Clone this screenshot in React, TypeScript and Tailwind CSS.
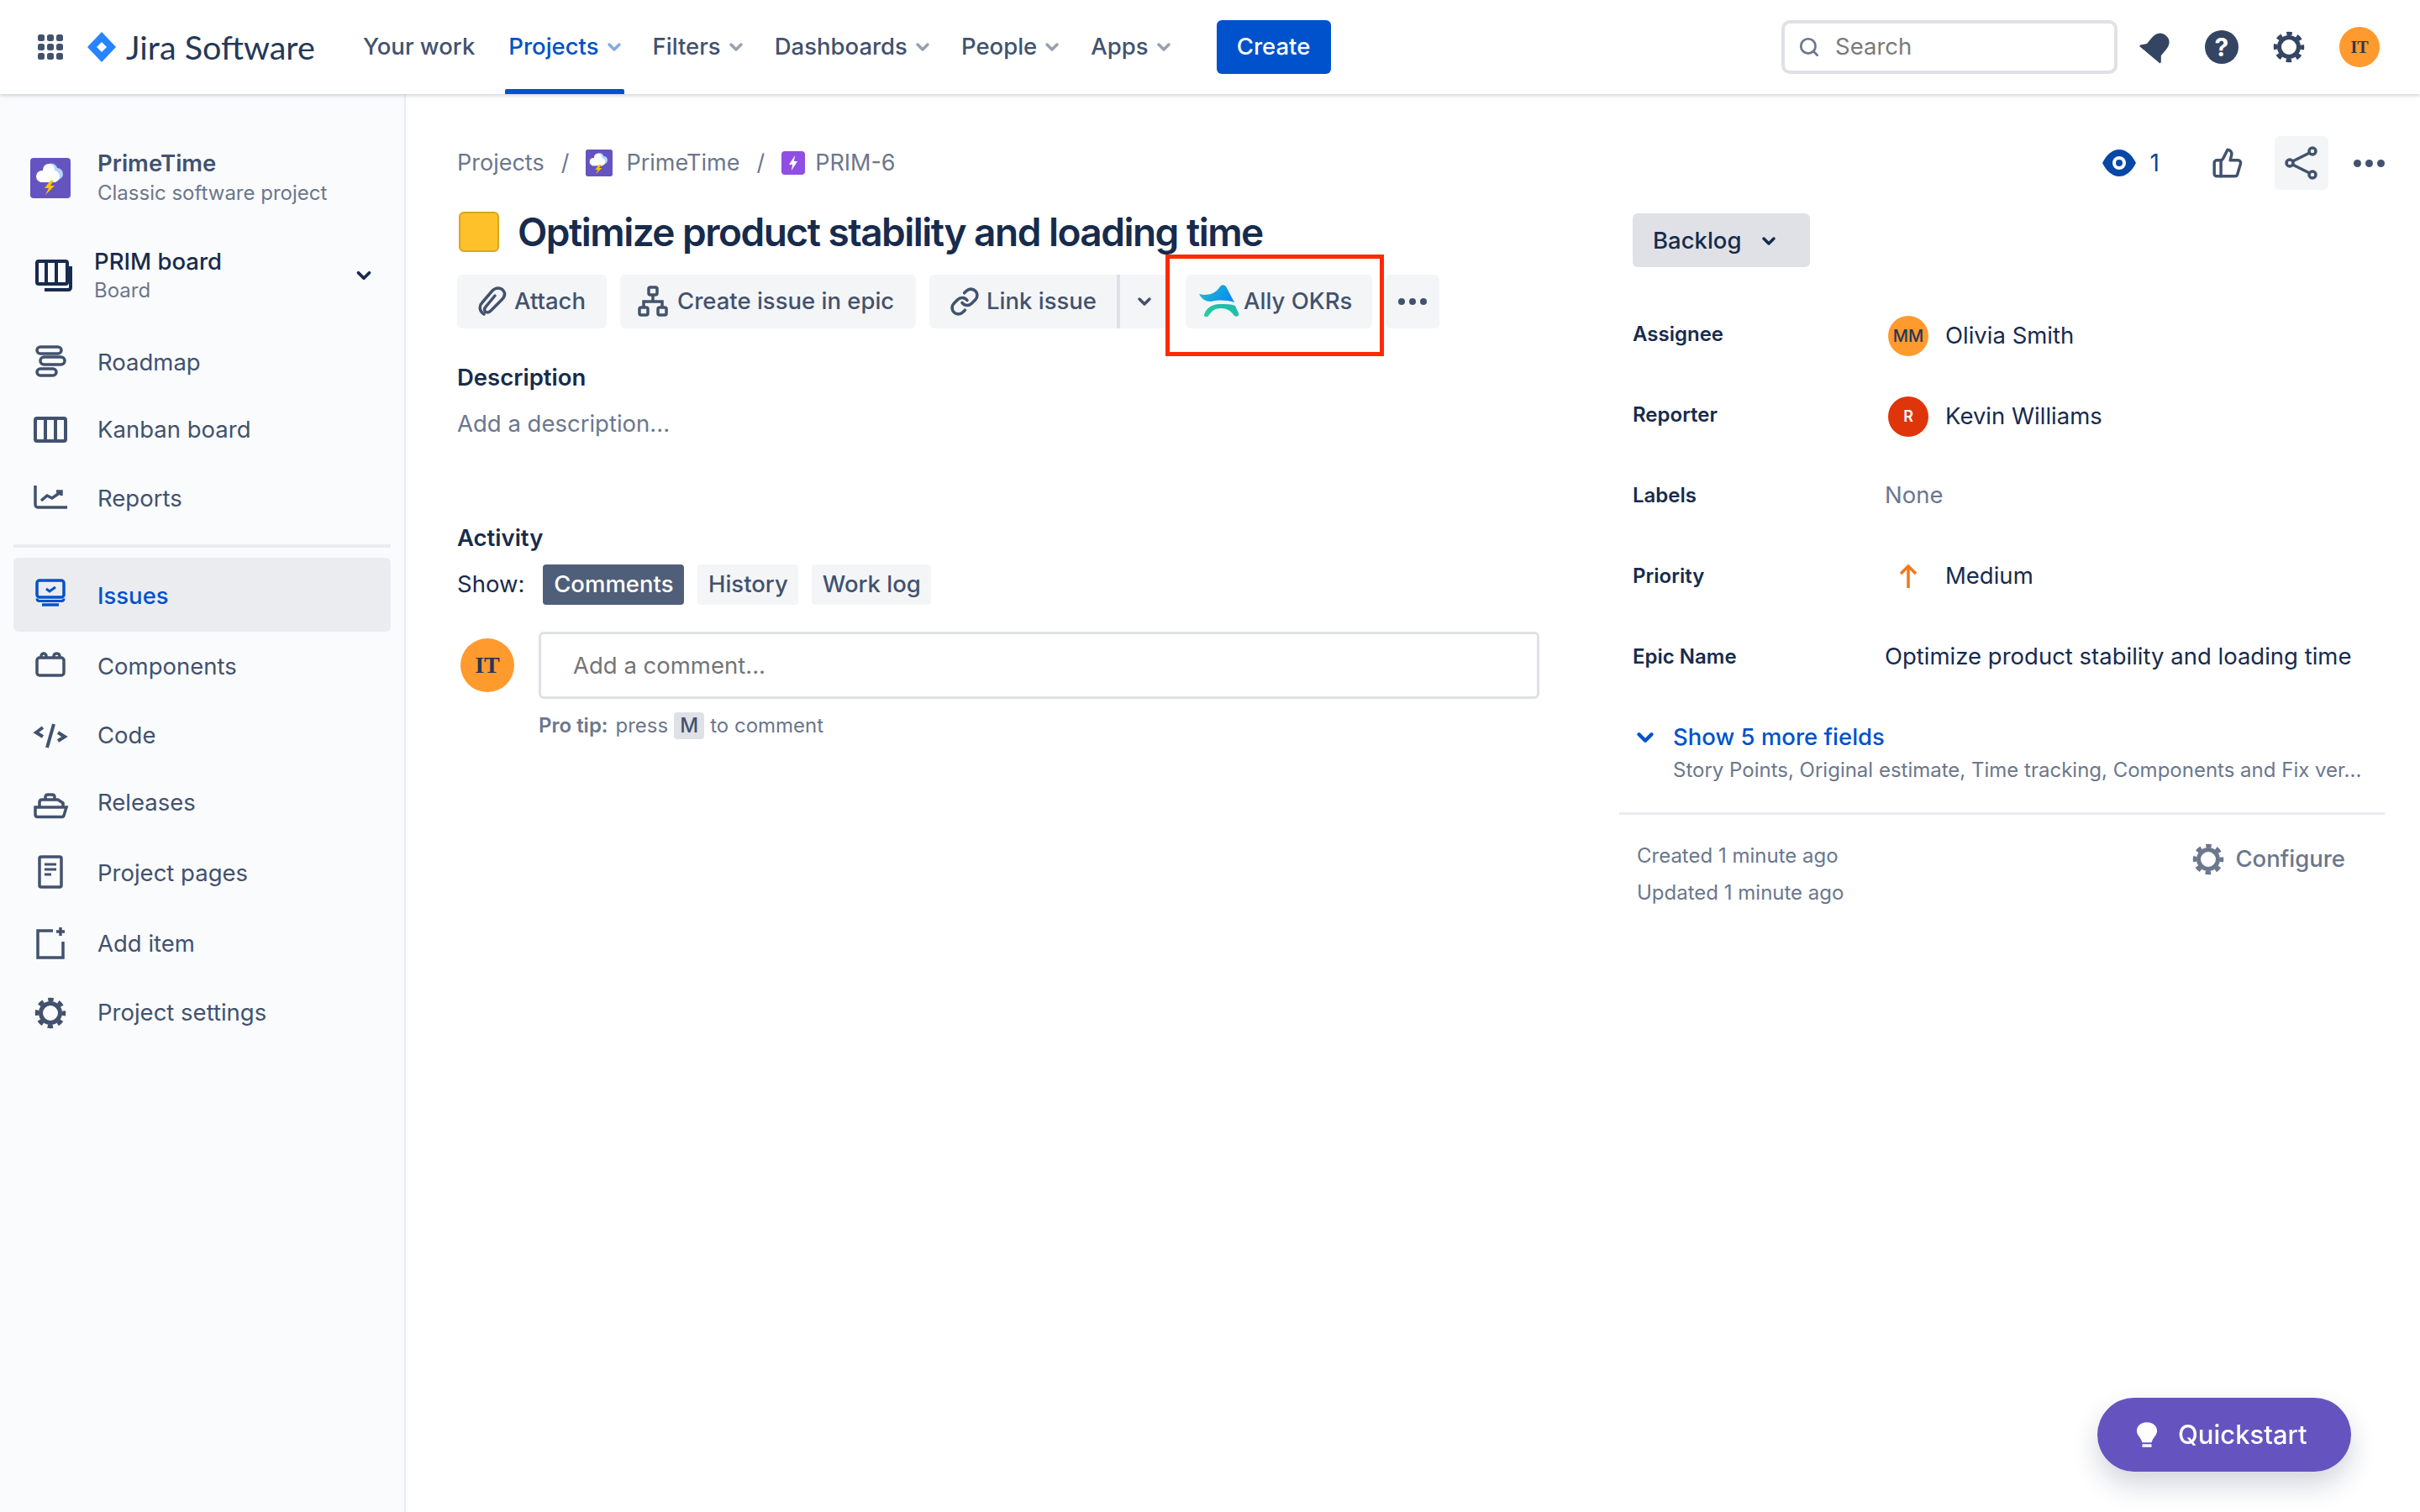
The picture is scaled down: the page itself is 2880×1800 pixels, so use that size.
import { useId } from 'react'
import { ChevronDown, Search, ThumbsUp, Link } from 'lucide-react'

const NAV = [
  { label: 'Projects', active: true, ml: 'ml-[40px]' },
  { label: 'Filters', active: false, ml: 'ml-[34px]' },
  { label: 'Dashboards', active: false, ml: 'ml-[34px]' },
  { label: 'People', active: false, ml: 'ml-[34px]' },
  { label: 'Apps', active: false, ml: 'ml-[34px]' },
]

function Gear({ size = 48, color = '#42526E' }: { size?: number; color?: string }) {
  return (
    <svg width={size} height={size} viewBox="0 0 48 48" fill="none">
      <circle cx="24" cy="24" r="11.500" stroke={color} strokeWidth="5" />
      <circle cx="24" cy="24" r="16" stroke={color} strokeWidth="4.500" strokeDasharray="6.5 6.07" strokeDashoffset="3.25" />
    </svg>
  )
}

function CloudLogo({ w, h }: { w: number; h: number }) {
  return (
    <svg width={w} height={h} viewBox="0 0 48 48" className="shrink-0">
      <rect width="48" height="48" rx="4" fill="#6554C0" />
      <circle cx="32" cy="19" r="7" fill="#B3D4FF" />
      <circle cx="25" cy="14" r="7.5" fill="#B3D4FF" />
      <circle cx="22" cy="14" r="7" fill="#fff" />
      <circle cx="14" cy="22" r="7" fill="#fff" />
      <circle cx="28" cy="22" r="7" fill="#fff" />
      <rect x="12" y="20" width="18" height="9" fill="#fff" />
      <path d="M24 27 L17 36 L22 36 L18 44 L29 33 L24 33 L28 27 Z" fill="#FFC400" />
    </svg>
  )
}

function AllyLogo() {
  const id = useId()
  return (
    <svg width="48" height="40" viewBox="0 0 48 40" className="shrink-0">
      <defs>
        <linearGradient id={id + 'a'} x1="0" y1="0" x2="1" y2="0.4">
          <stop offset="0" stopColor="#22C4C4" />
          <stop offset="1" stopColor="#0A8EF0" />
        </linearGradient>
        <linearGradient id={id + 'b'} x1="0" y1="1" x2="1" y2="0">
          <stop offset="0" stopColor="#22D39A" />
          <stop offset="1" stopColor="#1FB5B0" />
        </linearGradient>
      </defs>
      <path d="M0 11C8 13 16 12 22 6L26 1C28 0 30 0 32 2L42 21C32 18 24 18 14 20C8 20 3 17 0 11Z" fill={`url(#${id}a)`} />
      <path d="M6 36C8 28 16 23 24 23C32 23 38 23 43 25L47 34C48 38 44 39 41 36C38 31 33 28 26 28C19 28 15 31 12 36C10 39 6 39 6 36Z" fill={`url(#${id}b)`} />
    </svg>
  )
}

const stroke = { stroke: '#42526E', strokeWidth: 3.5, fill: 'none' }

const SIDE_ICONS: Record<string, React.ReactNode> = {
  Roadmap: (
    <g {...stroke}>
      <rect x="8" y="5" width="29" height="8" rx="4" />
      <rect x="12" y="17" width="29" height="9" rx="4.5" />
      <rect x="8" y="31" width="23" height="8" rx="4" />
    </g>
  ),
  'Kanban board': (
    <g {...stroke} strokeWidth="4">
      <rect x="6" y="10" width="36" height="27" rx="2" />
      <path d="M18 10v27M30 10v27" />
    </g>
  ),
  Reports: (
    <g {...stroke} strokeWidth="3.5">
      <path d="M6 8v22c0 3 1 4 4 4h34" />
      <path d="M13 26l7-6 6 3 10-7" />
      <path d="M31 15h6v5" />
    </g>
  ),
  Issues: (
    <g fill="none" stroke="#0052CC" strokeWidth="3.5">
      <rect x="8" y="7" width="32" height="20" rx="3" />
      <path d="M19 17l4 3 7-5" strokeWidth="3" />
      <path d="M8 28.5c0 2 1 3 3 3h26c2 0 3-1 3-3" strokeWidth="3" />
      <path d="M14 36h20" strokeWidth="3.5" />
    </g>
  ),
  Components: (
    <g {...stroke}>
      <rect x="8" y="13" width="32" height="21" rx="3" />
      <path d="M13 13v-2c0-4 6-4 6 0v2M28 13v-2c0-4 7-4 7 0v2" />
    </g>
  ),
  Code: (
    <g {...stroke} strokeWidth="4">
      <path d="M15 14L7 20l8 5M33 20l8 5-8 5M28 10l-8 28" />
    </g>
  ),
  Releases: (
    <g {...stroke}>
      <path d="M6 29h37l-3 10c-.4 1-1 1.500-2 1.500H9c-2 0-3-1-3-3z" />
      <path d="M11 29v-6c0-2 1-3 3-3h19l6 4v5" />
      <path d="M18 20v-3c0-2 1-3 3-3h5c2 0 3 1 3 3v3" />
    </g>
  ),
  'Project pages': (
    <g {...stroke}>
      <rect x="11" y="4" width="26" height="36" rx="2" />
      <path d="M17 13h14M17 19h14M17 25h8" strokeWidth="3" />
    </g>
  ),
  'Add item': (
    <g {...stroke}>
      <path d="M27 8H9v32h30V21" />
      <path d="M36 4v10M31 9h10" />
    </g>
  ),
}

const SIDE_ITEMS = [
  { label: 'Roadmap', row: 'h-[80px]' },
  { label: 'Kanban board', row: 'h-[80px]' },
  { label: 'Reports', row: 'h-[84px]' },
]
const SIDE_ITEMS_2 = [
  { label: 'Components', row: 'h-[84px]' },
  { label: 'Code', row: 'h-[80px]' },
  { label: 'Releases', row: 'h-[80px]' },
  { label: 'Project pages', row: 'h-[88px]' },
  { label: 'Add item', row: 'h-[80px]' },
]

function SideRow({ label, row }: { label: string; row: string }) {
  return (
    <div className={`${row} flex items-center pl-[36px] text-[27.5px] text-[#42526E]`}>
      <svg width="48" height="48" viewBox="0 0 48 48" className="mr-[32px] shrink-0">
        {SIDE_ICONS[label]}
      </svg>
      {label}
    </div>
  )
}

function ActionButton({ children, className = '' }: { children: React.ReactNode; className?: string }) {
  return (
    <div className={`flex h-[64px] items-center rounded-[6px] bg-[#F4F5F7] text-[27.5px] font-medium text-[#42526E] ${className}`}>
      {children}
    </div>
  )
}

function FieldRow({ label, children }: { label: string; children: React.ReactNode }) {
  return (
    <div className="flex h-[96px] items-center">
      <div className="w-[300px] text-[24px] font-semibold text-[#172B4D]">{label}</div>
      <div className="flex items-center text-[27.5px] text-[#172B4D]">{children}</div>
    </div>
  )
}

function Avatar({ text, size, className }: { text: string; size: string; className: string }) {
  return <div className={`flex shrink-0 items-center justify-center rounded-full ${size} ${className}`}>{text}</div>
}

export default function App() {
  return (
    <div className="relative flex h-screen w-full flex-col overflow-hidden bg-white font-['Inter',sans-serif]">
      {/* Top bar */}
      <header className="relative z-10 flex h-[112px] shrink-0 items-center bg-white pl-[44px] pr-[48px] shadow-[0_2px_4px_rgba(9,30,66,0.18)]">
        <svg width="32" height="32" viewBox="0 0 32 32" fill="#42526E" className="shrink-0">
          {[1, 12, 23].map((y) => [1, 12, 23].map((x) => <rect key={`${x}-${y}`} x={x} y={y} width="8" height="8" rx="2.500" />))}
        </svg>
        <svg width="34" height="36" viewBox="0 0 34 36" className="ml-[28px] shrink-0">
          <path d="M17 0L34 18 17 36 0 18z" fill="#2684FF" />
          <path d="M17 12l6 6-6 6-6-6z" fill="#fff" />
        </svg>
        <span className="ml-[12px] w-[222px] whitespace-nowrap font-['Lato',sans-serif] text-[39.5px] leading-none text-[#253858]">Jira Software</span>
        <span className="ml-[60px] text-[27.5px] font-medium text-[#42526E]">Your work</span>
        {NAV.map((n) => (
          <div key={n.label} className={`relative flex h-[112px] items-center ${n.ml} ${n.active ? 'text-[#0052CC]' : 'text-[#42526E]'}`}>
            <span className="text-[27.5px] font-medium">{n.label}</span>
            <ChevronDown size={24} strokeWidth={3.5} className={n.active ? 'ml-[6px] text-[#85A9E8]' : 'ml-[6px] text-[#97A0AF]'} />
            {n.active && <div className="absolute -left-[4px] right-0 bottom-0 h-[6px] rounded-t-[2px] bg-[#0052CC]" />}
          </div>
        ))}
        <div className="ml-[51px] flex h-[64px] w-[136px] items-center justify-center rounded-[6px] bg-[#0052CC] text-[27.5px] font-medium text-white">Create</div>

        <div className="ml-auto flex h-[64px] w-[400px] items-center rounded-[10px] border-[4px] border-[#DFE1E6] bg-white pl-[16px] text-[27.5px] text-[#7A7A7A]">
          <Search size={26} strokeWidth={2.5} className="text-[#6B778C]" />
          <span className="ml-[18px]">Search</span>
        </div>
        <svg width="40" height="40" viewBox="0 0 40 40" className="ml-[26px] shrink-0">
          <g transform="rotate(40 20 20)" fill="#344563">
            <path d="M20 2c-8 0-11 6-11 13v9l-5 6v2h32v-2l-5-6v-9c0-7-3-13-11-13z" />
          </g>
          <path d="M5 23l6 7-3 2z" fill="#fff" />
        </svg>
        <div className="ml-[38px] flex h-[40px] w-[40px] items-center justify-center rounded-full bg-[#344563] text-[30px] font-bold leading-none text-white">?</div>
        <div className="ml-[36px]"><Gear size={48} color="#344563" /></div>
        <Avatar text="IT" size="h-[48px] w-[48px]" className="ml-[36px] bg-[#FF9A2E] font-['Liberation_Serif',serif] text-[20px] font-bold text-[#253858]" />
      </header>

      <div className="flex min-h-0 flex-1">
        {/* Sidebar */}
        <aside className="w-[483px] shrink-0 border-r-[2px] border-[#EBECF0] bg-[#FAFBFC]">
          <div className="mt-[64px] flex items-center pl-[36px]">
            <CloudLogo w={48} h={48} />
            <div className="ml-[32px]">
              <div className="text-[27.5px] font-semibold leading-[36px] text-[#42526E]">PrimeTime</div>
              <div className="text-[24px] leading-[36px] text-[#6B778C]">Classic software project</div>
            </div>
          </div>
          <div className="mt-[45px] flex items-center pl-[42px] pr-[35px]">
            <svg width="44" height="38" viewBox="0 0 44 38" fill="none" stroke="#172B4D" strokeWidth="4" className="shrink-0">
              <rect x="2" y="2" width="36" height="27" rx="2" />
              <path d="M13 2v27M25 2v27M11 36h28c2 0 3-1 3-3V8" />
            </svg>
            <div className="ml-[26px] flex-1">
              <div className="text-[27.5px] font-medium leading-[36px] text-[#172B4D]">PRIM board</div>
              <div className="text-[24px] leading-[34px] text-[#6B778C]">Board</div>
            </div>
            <ChevronDown size={26} strokeWidth={3.5} className="text-[#172B4D]" />
          </div>
          <div className="mt-[29px]">
            {SIDE_ITEMS.map((s) => <SideRow key={s.label} {...s} />)}
          </div>
          <div className="mx-[16px] mt-[12px] h-[4px] bg-[#EBECF0]" />
          <div className="mx-[16px] mt-[12px] flex h-[88px] items-center rounded-[6px] bg-[#EBECF0] pl-[20px] text-[27.5px] font-medium text-[#0052CC]">
            <svg width="48" height="48" viewBox="0 0 48 48" className="mr-[32px] shrink-0">{SIDE_ICONS.Issues}</svg>
            <span className="pt-[3px]">Issues</span>
          </div>
          {SIDE_ITEMS_2.map((s) => <SideRow key={s.label} {...s} />)}
          <div className="flex h-[84px] items-center pl-[36px] text-[27.5px] text-[#42526E]">
            <div className="mr-[32px]"><Gear /></div>
            Project settings
          </div>
        </aside>

        {/* Main */}
        <main className="flex min-w-0 flex-1 pl-[61px] pr-[42px]">
          <div className="w-[1288px] shrink-0">
            <div className="mt-[62px] flex h-[40px] items-center text-[27px] text-[#6B778C]">
              Projects
              <span className="mx-[20px]">/</span>
              <CloudLogo w={32} h={32} />
              <span className="ml-[16px]">PrimeTime</span>
              <span className="mx-[20px]">/</span>
              <svg width="28" height="28" viewBox="0 0 28 28" className="mr-[12px]">
                <rect width="28" height="28" rx="4" fill="#904EE2" />
                <path d="M16 5l-7 11h4l-1 7 7-11h-4z" fill="#fff" />
              </svg>
              PRIM-6
            </div>
            <div className="mt-[32px] flex items-center">
              <div className="ml-[2px] h-[48px] w-[48px] rounded-[6px] border-[2px] border-[#D9A520] bg-[#FFC12A]" />
              <h1 className="ml-[22px] whitespace-nowrap text-[46px] font-semibold leading-[60px] tracking-[-0.033em] text-[#172B4D]">
                Optimize product stability and loading time
              </h1>
            </div>
            <div className="relative mt-[21px] flex items-center">
              <ActionButton className="w-[178px] gap-[8px] pl-[20px]">
                <svg width="40" height="40" viewBox="0 0 40 40" fill="none" stroke="#42526E" strokeWidth="3.500" strokeLinecap="round"><path d="M12 35C6 31 6 25 10 21L22 7C26 3 32 3 35 7C38 11 36 15 33 18L20 31C17 34 14 33 13 31C12 29 13 27 15 25L25 13" /></svg>
                Attach
              </ActionButton>
              <ActionButton className="ml-[16px] w-[352px] gap-[9px] pl-[19px]">
                <svg width="40" height="40" viewBox="0 0 40 40" fill="none" stroke="#42526E" strokeWidth="3.5"><rect x="15" y="3" width="10" height="9" rx="2" /><rect x="4" y="27" width="10" height="9" rx="2" /><rect x="26" y="27" width="10" height="9" rx="2" /><path d="M20 12v8M9 27v-7h22v7" /></svg>
                Create issue in epic
              </ActionButton>
              <ActionButton className="ml-[16px] w-[223px] justify-center gap-[8px] rounded-r-none">
                <Link size={36} strokeWidth={2.4} />
                Link issue
              </ActionButton>
              <div className="h-[64px] w-[4px] bg-[#DFE1E6]" />
              <ActionButton className="w-[56px] justify-center rounded-l-none pl-[2px]">
                <ChevronDown size={24} strokeWidth={3.500} />
              </ActionButton>
              <ActionButton className="ml-[22px] w-[222px] gap-[5px] bg-[#EBECF0] pl-[16px]">
                <AllyLogo />
                Ally OKRs
              </ActionButton>
              <ActionButton className="ml-[16px] w-[64px] justify-center gap-[5px]">
                <i className="h-[8px] w-[8px] rounded-full bg-[#42526E]" /><i className="h-[8px] w-[8px] rounded-full bg-[#42526E]" /><i className="h-[8px] w-[8px] rounded-full bg-[#42526E]" />
              </ActionButton>
              <div className="absolute left-[843px] top-[-24px] h-[121px] w-[260px] border-[5px] border-[#FF2A00]" />
            </div>
            <div className="mt-[40px] text-[27.5px] font-semibold leading-[36px] text-[#172B4D]">Description</div>
            <div className="mt-[19px] text-[27.5px] leading-[36px] text-[#6B778C]">Add a description...</div>
            <div className="mt-[100px] text-[27.5px] font-semibold leading-[36px] text-[#172B4D]">Activity</div>
            <div className="mt-[14px] flex items-center text-[27.5px] text-[#172B4D]">
              <span className="mr-[22px]">Show:</span>
              <div className="flex h-[48px] w-[168px] items-center justify-center rounded-[4px] bg-[#505F79] font-medium text-white">Comments</div>
              <div className="ml-[16px] flex h-[48px] w-[120px] items-center justify-center rounded-[4px] bg-[#F4F5F7] font-medium text-[#42526E]">History</div>
              <div className="ml-[16px] flex h-[48px] w-[142px] items-center justify-center rounded-[4px] bg-[#F4F5F7] font-medium text-[#42526E]">Work log</div>
            </div>
            <div className="mt-[32px] flex items-center">
              <Avatar text="IT" size="h-[64px] w-[64px]" className="ml-[4px] bg-[#FF9A2E] font-['Liberation_Serif',serif] text-[28px] font-bold text-[#253858]" />
              <div className="ml-[29px] flex h-[80px] w-[1192px] items-center rounded-[6px] border-[3px] border-[#DFE1E6] pl-[38px] pt-[2px] text-[27.5px] text-[#757575]">Add a comment...</div>
            </div>
            <div className="ml-[97px] mt-[16px] flex h-[32px] items-center text-[24px] text-[#6B778C]">
              <span className="font-semibold">Pro tip:</span>
              <span className="ml-[9px]">press</span>
              <span className="mx-[7px] flex h-[32px] w-[36px] items-center justify-center rounded-[4px] bg-[#DFE1E6] font-medium text-[#42526E]">M</span>
              to comment
            </div>
          </div>

          <div className="ml-[95px] min-w-0 flex-1">
            <div className="mt-[50px] flex h-[64px] items-center justify-end pr-0 text-[28px]">
              <svg width="40" height="32" viewBox="0 0 40 32"><path d="M0 16C5 6 12 0 20 0s15 6 20 16c-5 10-12 16-20 16S5 26 0 16z" fill="#0747A6" /><circle cx="20" cy="16" r="8" fill="#fff" /><circle cx="20" cy="16" r="4" fill="#0747A6" /></svg>
              <span className="ml-[17px] text-[#0747A6]">1</span>
              <ThumbsUp size={38} strokeWidth={2.2} className="ml-[62px] text-[#42526E]" />
              <div className="ml-[37px] flex h-[64px] w-[64px] items-center justify-center rounded-[6px] bg-[#F4F5F7]">
                <svg width="40" height="40" viewBox="0 0 40 40" fill="none" stroke="#42526E" strokeWidth="3.5"><circle cx="6" cy="20" r="4" /><circle cx="33" cy="6" r="4" /><circle cx="33" cy="34" r="4" /><path d="M9.500 18l20-10M9.500 22l20 10" /></svg>
              </div>
              <div className="ml-[30px] flex gap-[5px]">
                <i className="h-[9px] w-[9px] rounded-full bg-[#42526E]" /><i className="h-[9px] w-[9px] rounded-full bg-[#42526E]" /><i className="h-[9px] w-[9px] rounded-full bg-[#42526E]" />
              </div>
            </div>
            <div className="mt-[28px] pl-[16px]">
              <div className="flex h-[64px] w-[211px] items-center gap-[20px] rounded-[6px] bg-[#DFE1E6] pl-[24px] pt-[2px] text-[27.5px] font-medium text-[#172B4D]">
                Backlog
                <ChevronDown size={24} strokeWidth={3.500} />
              </div>
              <div className="mt-[32px]">
                <FieldRow label="Assignee">
                  <div className="mt-[3px] flex items-center">
                    <Avatar text="MM" size="h-[48px] w-[48px]" className="ml-[4px] bg-[#FF9A2E] text-[20px] font-medium text-[#253858]" />
                    <span className="ml-[20px]">Olivia Smith</span>
                  </div>
                </FieldRow>
                <FieldRow label="Reporter">
                  <div className="mt-[3px] flex items-center">
                    <Avatar text="R" size="h-[48px] w-[48px]" className="ml-[4px] bg-[#DE350B] text-[18px] font-semibold text-white" />
                    <span className="ml-[20px]">Kevin Williams</span>
                  </div>
                </FieldRow>
                <FieldRow label="Labels"><span className="text-[#6B778C]">None</span></FieldRow>
                <FieldRow label="Priority">
                  <svg width="48" height="32" viewBox="0 0 48 32" fill="none" stroke="#F0781E" strokeWidth="3.500" className="ml-[4px]"><path d="M24 30V4M15 13l9-9 9 9" /></svg>
                  <span className="ml-[20px]">Medium</span>
                </FieldRow>
                <FieldRow label="Epic Name">Optimize product stability and loading time</FieldRow>
              </div>
            </div>
            <div className="ml-[16px] mt-[28px] flex h-[40px] items-center text-[27.5px] font-medium text-[#0052CC]">
              <ChevronDown size={30} strokeWidth={3.500} className="mr-[18px]" />
              Show 5 more fields
            </div>
            <div className="ml-[64px] h-[36px] pt-[1px] text-[24px] leading-[36px] text-[#6B778C]">Story Points, Original estimate, Time tracking, Components and Fix ver...</div>
            <div className="mt-[33px] h-[3px] bg-[#EBECF0]" />
            <div className="mt-[27px] flex items-center justify-between pl-[21px] pr-[47px] text-[24px] text-[#6B778C]">
              <div className="leading-[44px]">
                <div>Created 1 minute ago</div>
                <div>Updated 1 minute ago</div>
              </div>
              <div className="-mt-[36px] flex items-center gap-[8px] text-[27.5px] font-medium">
                <Gear size={48} color="#6B778C" />
                Configure
              </div>
            </div>
          </div>
        </main>
      </div>

      <div className="fixed bottom-[48px] right-[82px] flex h-[88px] w-[302px] items-center gap-[24px] rounded-full bg-[#6554C0] pl-[46px] text-[31px] font-medium text-white shadow-[0_16px_32px_rgba(9,30,66,0.18)]">
        <svg width="26" height="32" viewBox="0 0 28 34" fill="#fff">
          <path d="M14 1C6 1 1 6 1 12c0 6 5 8 7 15h12c2-7 7-9 7-15C27 6 22 1 14 1z" />
          <rect x="8" y="29" width="12" height="4" rx="1" />
        </svg>
        Quickstart
      </div>
    </div>
  )
}
